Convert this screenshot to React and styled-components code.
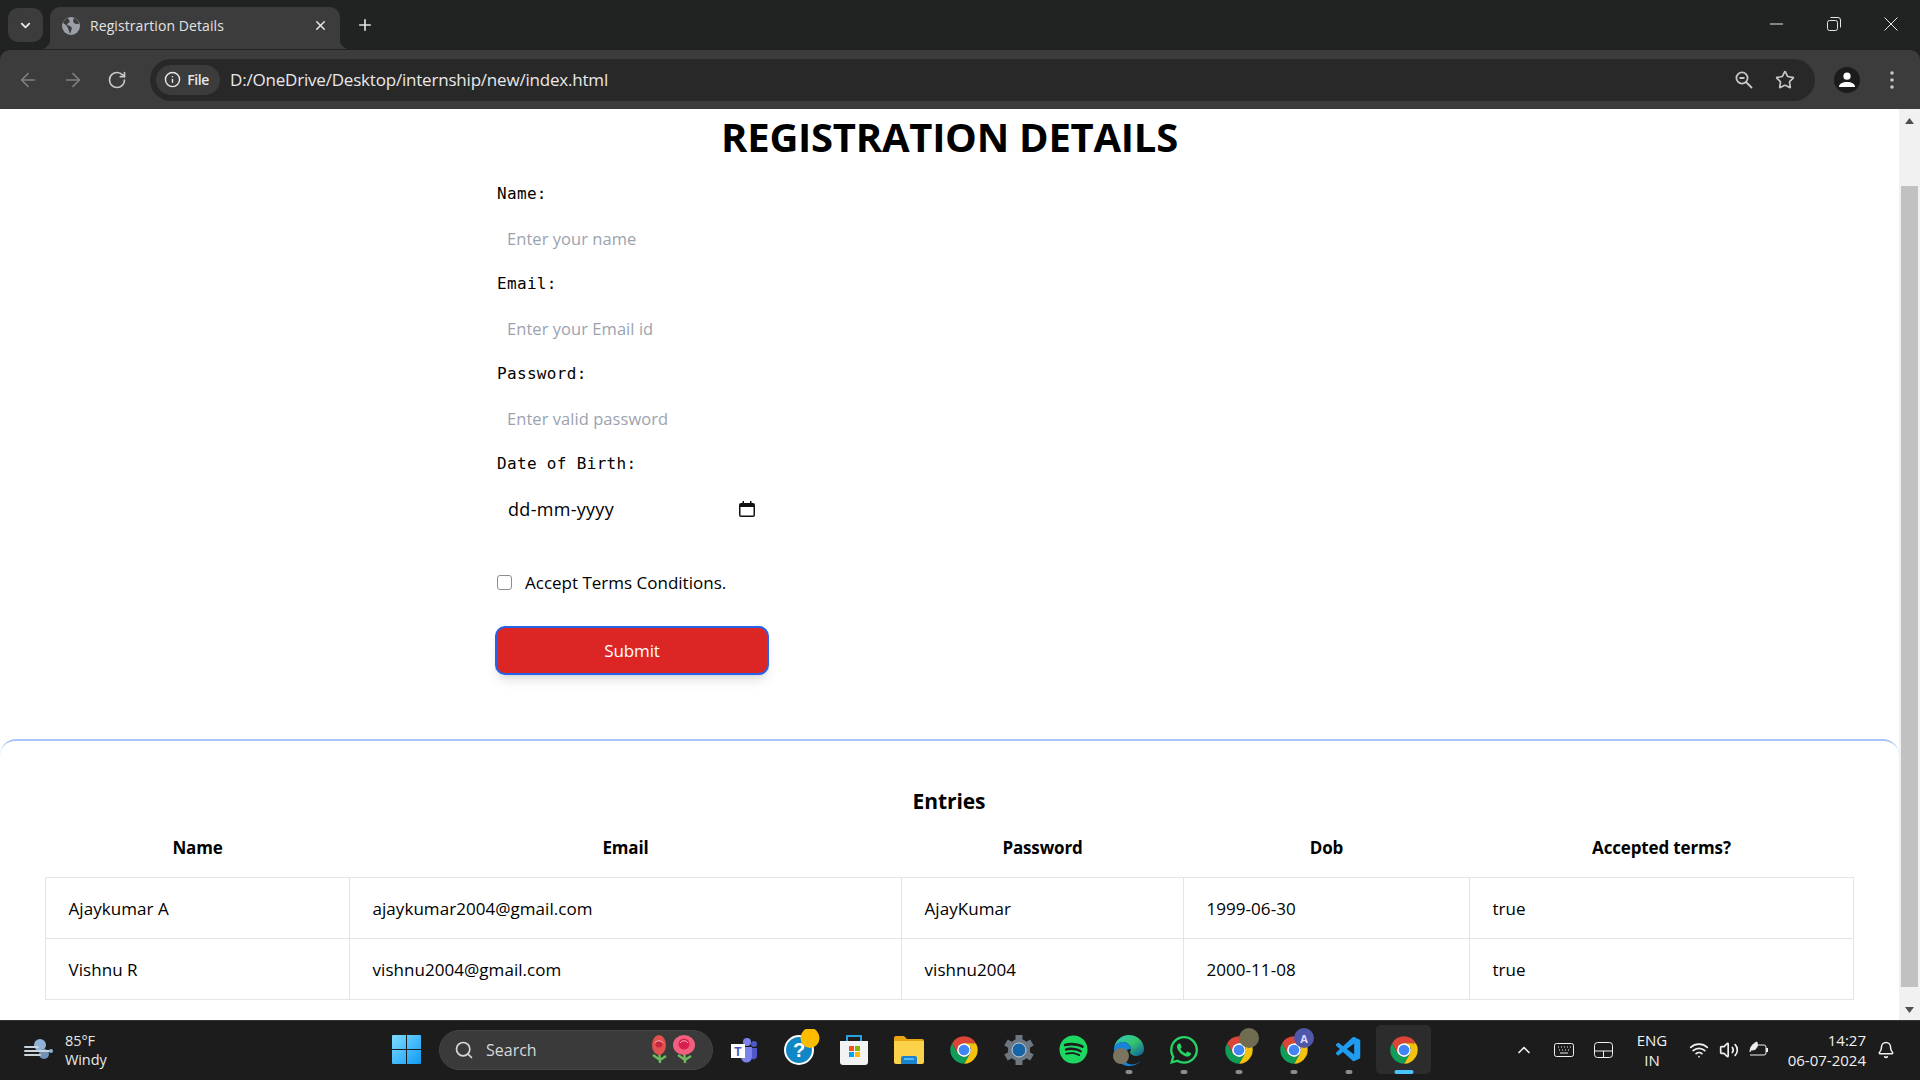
import React from "react";
import styled, { createGlobalStyle } from "styled-components";
import { ArrowLeft, ArrowRight, RotateCw, Info, Star, Search, X, Plus, ChevronDown, ChevronUp, Bell, Volume2, Wifi } from "lucide-react";
import { FaSpotify, FaWhatsapp } from "react-icons/fa";
import { VscVscode } from "react-icons/vsc";

const UI = `"Open Sans", "Noto Sans", sans-serif`;

const Global = createGlobalStyle`
  html, body { margin: 0; padding: 0; overflow: hidden; background: #fff; }
  * { box-sizing: border-box; }
  body { font-family: ${UI}; }
`;

const Screen = styled.div`
  width: 1920px; height: 1080px; display: flex; flex-direction: column;
  background: #202322; overflow: hidden;
`;

/* ---- browser chrome ---- */
const TabStrip = styled.div`
  height: 50px; flex: none; display: flex; align-items: flex-start; padding: 8px 0 0 8px;
`;
const TabSearch = styled.div`
  width: 35px; height: 34px; border-radius: 10px; background: #3c3c3c; color: #e6e6e6;
  display: flex; align-items: center; justify-content: center; margin-right: 7px;
`;
const Tab = styled.div`
  position: relative; width: 290px; height: 42px; margin-top: -1px; background: #3c3c3c; border-radius: 10px 10px 0 0;
  display: flex; align-items: center; padding: 0 12px 5px 12px; color: #e3e3e3;
  &::before, &::after { content: ""; position: absolute; bottom: 0; width: 10px; height: 10px; }
  &::before { left: -10px; background: radial-gradient(circle at 0 0, transparent 10px, #3c3c3c 10.5px); }
  &::after { right: -10px; background: radial-gradient(circle at 100% 0, transparent 10px, #3c3c3c 10.5px); }
`;
const TabTitle = styled.span`
  flex: 1; margin-left: 10px; font-size: 14px; letter-spacing: 0.08px; white-space: nowrap;
`;
const NewTab = styled.div`
  margin: 8px 0 0 16px; color: #e3e3e3; display: flex;
`;
const WindowButtons = styled.div`
  margin-left: auto; height: 34px; display: flex; align-items: center; color: #e6e6e6; padding-right: 22px; gap: 43px; margin-top: -1px;
`;
const Toolbar = styled.div`
  height: 59px; flex: none; background: #3c3c3c; border-radius: 10px 10px 0 0; display: flex; align-items: center;
  padding: 0 16px 0 16px;
`;
const NavGroup = styled.div`
  display: flex; gap: 23px; align-items: center; width: 134px; padding-left: 1px;
`;
const NavIcon = styled.span`
  display: flex; color: ${(p) => (p.$dim ? "#7f8080" : "#c8c8c8")};
`;
const Omnibox = styled.div`
  width: 1665px; height: 42px; border-radius: 21px; background: #282828; display: flex; align-items: center;
  padding: 0 20px 0 6px; color: #e8e8e8; flex: none;
`;
const FileChip = styled.div`
  width: 64px; height: 30px; border-radius: 15px; background: #3c3c3c; display: flex; align-items: center; justify-content: center; gap: 6px; padding-right: 3px;
  font-size: 14px; font-weight: 600; letter-spacing: -0.4px; color: #e8e8e8;
`;
const Url = styled.span`
  margin-left: 10px; font-size: 17px; letter-spacing: -0.2px; flex: 1; white-space: nowrap;
`;
const OmniActions = styled.div`
  display: flex; align-items: center; gap: 22px; color: #c7c7c7;
`;
const Profile = styled.div`
  width: 26px; height: 26px; border-radius: 50%; background: #1b1b1b; margin-left: 19px; display: flex; align-items: center; justify-content: center; flex: none;
`;
const Dots = styled.div`
  margin-left: 30px; display: flex; color: #c7c7c7;
`;

/* ---- page ---- */
const Viewport = styled.div`
  flex: 1; min-height: 0; display: flex; background: #fff;
`;
const Page = styled.main`
  flex: 1; min-width: 0; color: #000; overflow: hidden;
`;
const Title = styled.h1`
  margin: 0; height: 56px; line-height: 55px; text-align: center; font-size: 40px; font-weight: 700; letter-spacing: -0.26px;
`;
const Form = styled.form`
  width: 274px; margin-left: 495px; padding-top: 16px; display: flex; flex-direction: column;
`;
const Label = styled.label`
  display: block; height: 24px; line-height: 26px; padding-left: 2px; margin-bottom: 12px; font-family: "DejaVu Sans Mono", monospace; font-size: 16px; letter-spacing: 0.33px;
`;
const TextInput = styled.input`
  display: block; width: 100%; height: 42px; border: 0; outline: 0; padding: 0 12px; margin-bottom: 12px; font-family: ${UI}; font-size: 16.5px; letter-spacing: 0.05px; background: #fff;
  &::placeholder { color: #9ca3af; opacity: 1; }
`;
const DateField = styled.div`
  height: 46px; display: flex; align-items: center; justify-content: space-between; padding: 0 14px 2px 13px; font-size: 18px; letter-spacing: 0.3px; margin-bottom: 37px;
`;
const CheckRow = styled.label`
  height: 24px; display: flex; align-items: center; gap: 13px; padding-left: 2px; font-size: 17px; letter-spacing: 0; white-space: nowrap; margin-bottom: 32px;
`;
const Check = styled.input`
  appearance: none; width: 15px; height: 15px; margin: 0; border: 1.5px solid #8d8d8d; border-radius: 3px; background: #fff; flex: none;
`;
const Submit = styled.button`
  width: 274px; height: 49px; border: 2px solid #2563eb; border-radius: 10px; background: #dc2626; color: #fff; font-family: ${UI}; font-size: 17px; letter-spacing: -0.1px;
  box-shadow: 0 8px 12px -3px rgba(0,0,0,.12), 0 3px 5px -3px rgba(0,0,0,.1);
`;
const Entries = styled.section`
  margin-top: 64px; border-top: 2px solid #a9c5fa; border-radius: 16px 16px 0 0; padding: 46px 46px 0 45px;
`;
const EntriesTitle = styled.h2`
  margin: 0; height: 28px; line-height: 28px; text-align: center; font-size: 21px; font-weight: 700; letter-spacing: -0.1px;
`;
const Table = styled.table`
  width: 1808px; table-layout: fixed; border-collapse: collapse; font-size: 17px; letter-spacing: 0.05px;
`;
const Col = styled.col`
  width: ${(p) => p.$w}px;
`;
const Th = styled.th`
  height: 62px; font-size: 17px; font-weight: 700; text-align: center; padding: 4px 0 0; letter-spacing: -0.15px;
`;
const Td = styled.td`
  height: 61px; border: 1px solid #e5e5e5; padding: 1px 22.500px 0;
`;
const Scrollbar = styled.div`
  width: 21px; flex: none; background: #f1f1f1; display: flex; flex-direction: column; align-items: center; padding: 0 2px;
`;
const ScrollArrow = styled.div`
  height: ${(p) => p.$h}px; flex: none; display: flex; align-items: center; justify-content: center; color: #505050; font-size: 0;
  padding-bottom: ${(p) => (p.$up ? 54 : 0)}px;
  padding-top: ${(p) => (p.$up ? 0 : 12)}px;
`;
const ScrollThumb = styled.div`
  width: 17px; height: 801px; flex: none; background: #c1c1c1;
`;

/* ---- taskbar ---- */
const Taskbar = styled.footer`
  height: 60px; flex: none; background: #1c1c1c; border-top: 1px solid #333; display: flex; align-items: center; color: #fff; padding-bottom: 2px;
`;
const Weather = styled.div`
  width: 392px; flex: none; display: flex; align-items: center; gap: 11px; padding-left: 24px; font-size: 14.500px; line-height: 19px; letter-spacing: -0.1px; color: #e8e8e8;
`;
const StartButton = styled.div`
  width: 47px; flex: none; display: flex;
`;
const SearchPill = styled.div`
  width: 274px; height: 40px; flex: none; border-radius: 20px; background: #3a3a3a; border: 1px solid #444; display: flex; align-items: center; padding: 0 12px 0 14px; color: #d8d8d8; font-size: 16px;
`;
const SearchText = styled.span`
  margin-left: 12px; flex: 1;
`;
const Apps = styled.div`
  display: flex; margin-left: 3px; flex: none;
`;
const AppItem = styled.div`
  position: relative; width: 55px; height: 49px; display: flex; align-items: center; justify-content: center; border-radius: 5px;
  background: ${(p) => (p.$active ? "#2c2c2c" : "transparent")};
  &::after {
    content: ${(p) => (p.$running || p.$active ? '""' : "none")};
    position: absolute; left: 50%; bottom: 0; transform: translateX(-50%); height: 4px; border-radius: 2px;
    width: ${(p) => (p.$active ? 19 : 7)}px; background: ${(p) => (p.$active ? "#4cc2ff" : "#8c8c8c")};
  }
`;
const Badge = styled.span`
  position: absolute; width: ${(p) => p.$s}px; height: ${(p) => p.$s}px; border-radius: 50%;
  left: ${(p) => p.$l}px; top: ${(p) => p.$t}px; background: ${(p) => p.$bg};
  color: #d9dcff; font-size: 11px; font-weight: 700; display: flex; align-items: center; justify-content: center;
`;
const Tray = styled.div`
  margin-left: 73px; display: flex; align-items: center; flex: none; color: #f0f0f0;
`;
const TrayIcon = styled.span`
  display: flex; justify-content: center; width: ${(p) => p.$w}px;
`;
const Lang = styled.div`
  width: 60px; text-align: center; font-size: 15px; line-height: 20px; margin: 0 2px 0 0;
`;
const Clock = styled.div`
  margin-left: 0; width: 92px; text-align: right; font-size: 15px; line-height: 20px; white-space: nowrap;
`;
const BellSlot = styled.span`
  display: flex; margin-left: 11px;
`;

/* ---- drawn icons ---- */
const Globe = () => (
  <svg width="18" height="18" viewBox="0 0 18 18"><circle cx="9" cy="9" r="9" fill="#9aa0a6" /><path d="M6 1C4 2 2 3 1 6l3 2 2 3 1 3 1 3 1-3 1-3-2-2-3-1 1-2 2-1zM12 1l-1 3 1 2 2 1 3 0c-.500-3-3-5.500-5-6z" fill="#3c3c3c" /></svg>
);
const Restore = () => (
  <svg width="14" height="14" viewBox="0 0 14 14" fill="none" stroke="currentColor"><rect x="0.5" y="3.5" width="10" height="10" rx="2" /><path d="M3.5 .5h7.5a2.5 2.5 0 0 1 2.5 2.5v7.5" /></svg>
);
const MinLine = () => (
  <svg width="14" height="14" viewBox="0 0 14 14"><path d="M0 7h13" stroke="currentColor" /></svg>
);
const CloseX = () => (
  <svg width="14" height="14" viewBox="0 0 14 14"><path d="M.5.5l13 13M13.5.5l-13 13" stroke="currentColor" /></svg>
);
const ZoomOutIcon = () => (
  <svg width="18" height="18" viewBox="0 0 18 18" fill="none" stroke="#c7c7c7" strokeWidth="1.8"><circle cx="7" cy="7" r="5.6" /><path d="M11 11l6 6M4.5 7h5" /></svg>
);
const Person = () => (
  <svg width="16" height="16" viewBox="0 0 16 16" fill="#fff"><circle cx="8" cy="4.2" r="3.6" /><path d="M0 15c0-3.5 3.5-5 8-5s8 1.500 8 5z" /></svg>
);
const VDots = () => (
  <svg width="4" height="18" viewBox="0 0 4 18" fill="#c7c7c7"><circle cx="2" cy="2" r="1.8" /><circle cx="2" cy="9" r="1.8" /><circle cx="2" cy="16" r="1.8" /></svg>
);
const CalendarIcon = () => (
  <svg width="16" height="16" viewBox="0 0 16 16"><path d="M3.500 0h1.500v2h6V0h1.500v2H14a2 2 0 0 1 2 2v10a2 2 0 0 1-2 2H2a2 2 0 0 1-2-2V4a2 2 0 0 1 2-2h1.500zM1.500 6v8a.5.5 0 0 0 .5.5h12a.5.5 0 0 0 .5-.5V6z" fill="#111" /></svg>
);
const Triangle = ({ up }) => (
  <svg width="9" height="6" viewBox="0 0 9 6" fill="currentColor"><path d={up ? "M4.500 0L9 6H0z" : "M4.500 6L0 0h9z"} /></svg>
);
const WindIcon = () => (
  <svg width="30" height="24" viewBox="0 0 30 24"><circle cx="16" cy="7" r="6" fill="#8fb2d6" /><circle cx="20" cy="16" r="5" fill="#6f93b8" /><path d="M1 9h13M1 13h25M1 17h15" stroke="#c9d3dc" strokeWidth="2" strokeLinecap="round" /><circle cx="27" cy="13" r="2" fill="#8fb2d6" /></svg>
);
const WinLogo = () => (
  <svg width="29" height="29" viewBox="0 0 29 29"><defs><linearGradient id="w" x1="0" y1="0" x2="1" y2="1"><stop offset="0" stopColor="#7fdcff" /><stop offset="1" stopColor="#0f9bf5" /></linearGradient></defs><path fill="url(#w)" d="M1 0h13v14H0V1a1 1 0 0 1 1-1zM15 0h13a1 1 0 0 1 1 1v13H15zM0 15h14v14H1a1 1 0 0 1-1-1zM15 15h14v13a1 1 0 0 1-1 1H15z" /></svg>
);
const Rose = ({ x, r, c, d }) => (
  <g transform={`translate(${x} 0)`}>
    <path d="M11 14l1 14M12 25l-7-5M12 25l6-4" stroke="#6cb95e" strokeWidth="2.400" fill="none" />
    <ellipse cx="11" cy="10" rx={r} ry="10" fill={c} /><circle cx="11" cy="9" r={r / 2} fill={d} /><path d="M7 8c2-3 6-3 8 0" stroke="#ffb3bd" fill="none" />
  </g>
);
const Roses = () => (
  <svg width="52" height="29" viewBox="0 0 52 29"><Rose x="0" r="7" c="#e2504f" d="#c5283a" /><Rose x="25" r="11" c="#f2607f" d="#d6204f" /></svg>
);
const Teams = () => (
  <svg width="28" height="28" viewBox="0 0 28 28"><circle cx="17" cy="6" r="4" fill="#7b83eb" /><circle cx="24" cy="8" r="3" fill="#5059c9" /><path d="M11 11h11v10a5 5 0 0 1-11 0z" fill="#7b83eb" /><path d="M22 12h5v8a3.500 3.500 0 0 1-5 3z" fill="#5059c9" /><rect x="1" y="8" width="14" height="14" fill="#fff" /><text x="8" y="19.500" textAnchor="middle" fontSize="12" fontWeight="700" fill="#4b53bc" fontFamily="Liberation Sans">T</text></svg>
);
const HelpIcon = () => (
  <svg width="44" height="42" viewBox="0 0 44 42"><circle cx="22" cy="21" r="14" fill="#0f87c4" stroke="#fff" strokeWidth="2" /><text x="22" y="28" textAnchor="middle" fontSize="20" fontWeight="700" fill="#fff" fontFamily="Liberation Sans">?</text><ellipse cx="33" cy="9" rx="9.500" ry="10" fill="#fdbc00" /></svg>
);
const StoreIcon = () => (
  <svg width="30" height="32" viewBox="0 0 30 32"><path d="M8 7V2h14v5" fill="none" stroke="#2aa0e0" strokeWidth="2" /><path d="M1 7h28v21a3 3 0 0 1-3 3H4a3 3 0 0 1-3-3z" fill="#f3f3f3" /><rect x="10" y="12" width="5" height="5" fill="#f25022" /><rect x="16" y="12" width="5" height="5" fill="#7fba00" /><rect x="10" y="18" width="5" height="5" fill="#00a4ef" /><rect x="16" y="18" width="5" height="5" fill="#ffb900" /></svg>
);
const FolderIcon = () => (
  <svg width="30" height="28" viewBox="0 0 30 28"><path d="M0 2a2 2 0 0 1 2-2h8l3 3h15a2 2 0 0 1 2 2v4H0z" fill="#e8a513" /><path d="M0 5h30v21a2 2 0 0 1-2 2H2a2 2 0 0 1-2-2z" fill="#fbd249" /><path d="M7 28v-6a2 2 0 0 1 2-2h12a2 2 0 0 1 2 2v6z" fill="#1a82d0" /><rect x="10" y="22" width="10" height="2" fill="#5bb8f0" /></svg>
);
const Gear = () => (
  <svg width="30" height="30" viewBox="0 0 30 30"><g fill="#6d7782"><circle cx="15" cy="15" r="11" />{[0, 60, 120, 180, 240, 300].map((a) => (<rect key={a} x="11.500" y="0" width="7" height="7" transform={`rotate(${a} 15 15)`} />))}</g><circle cx="15" cy="15" r="7" fill="#1565a8" stroke="#c3d0da" strokeWidth="1" /></svg>
);
const Edge = () => (
  <svg width="30" height="32" viewBox="0 0 30 32"><defs><linearGradient id="e" x1="0" y1="0" x2="1" y2="1"><stop offset="0" stopColor="#2ec9c4" /><stop offset=".5" stopColor="#36c56b" /><stop offset="1" stopColor="#0c59a4" /></linearGradient></defs><path d="M15 1c8 0 15 6 15 14 0 5-4 7-8 7-3 0-6-2-6-4 0-1 1-1 1-3 0-4-4-7-8-7C5 8 1 11 0 14 1 7 7 1 15 1z" fill="url(#e)" /><path d="M0 14c1-4 5-6 9-6 4 0 8 3 8 7-6 0-9 5-5 13 2 3 9 4 15-1-4 4-8 5-12 5C7 32 0 25 0 14z" fill="#1784d8" /></svg>
);
const Chrome = () => (
  <svg width="30" height="30" viewBox="0 0 48 48">
    {[["#db4437", 0], ["#f4c20d", 120], ["#0f9d58", 240]].map(([c, a]) => (
      <path key={a} fill={c} transform={`rotate(${a} 24 24)`} d="M5 13A22 22 0 0 1 43.050 13L24 13A11 11 0 0 0 14.470 18.500Z" />
    ))}
    <path fill="#db4437" d="M5 13L14.500 29.500L19 27 14.470 18.500 12 13z" />
    <path fill="#f4c20d" d="M43.050 13L24 13v3L32 20z" />
    <path fill="#0f9d58" d="M24 46L33.500 29.500 30 27 24 35z" />
    <circle cx="24" cy="24" r="11" fill="#fff" /><circle cx="24" cy="24" r="8.500" fill="#4285f4" />
  </svg>
);
const Keyboard = () => (
  <svg width="20" height="14" viewBox="0 0 20 14" fill="none" stroke="currentColor"><rect x=".5" y=".5" width="19" height="13" rx="2" /><path d="M4 4h1M7 4h1M10 4h1M13 4h1M16 4h1M5 7h1M8 7h1M11 7h1M14 7h1M6 10h8" /></svg>
);
const Touchpad = () => (
  <svg width="19" height="16" viewBox="0 0 19 16" fill="none" stroke="currentColor"><rect x=".5" y=".5" width="18" height="15" rx="3" /><path d="M.5 9h18M9.500 9v6.500" /></svg>
);
const Battery = () => (
  <svg width="20" height="18" viewBox="0 0 20 18" fill="none" stroke="currentColor"><path d="M7 4h8a2 2 0 0 1 2 2v6a2 2 0 0 1-2 2H1" /><path d="M18 7v4" strokeWidth="2" /><path d="M1 11C1 5 5 2 8 1c1 4 0 8-5 8" fill="currentColor" /></svg>
);

const rows = [
  ["Ajaykumar A", "ajaykumar2004@gmail.com", "AjayKumar", "1999-06-30", "true"],
  ["Vishnu R", "vishnu2004@gmail.com", "vishnu2004", "2000-11-08", "true"],
];
const cols = [304, 552, 282, 286, 384];
const heads = ["Name", "Email", "Password", "Dob", "Accepted terms?"];

export default function App() {
  return (
    <Screen>
      <Global />
      <TabStrip>
        <TabSearch><ChevronDown size={15} strokeWidth={3} /></TabSearch>
        <Tab>
          <Globe />
          <TabTitle>Registrartion Details</TabTitle>
          <X size={15} strokeWidth={2.5} />
        </Tab>
        <NewTab><Plus size={18} strokeWidth={2.2} /></NewTab>
        <WindowButtons><MinLine /><Restore /><CloseX /></WindowButtons>
      </TabStrip>
      <Toolbar>
        <NavGroup>
          <NavIcon $dim><ArrowLeft size={22} strokeWidth={1.7} /></NavIcon>
          <NavIcon $dim><ArrowRight size={22} strokeWidth={1.7} /></NavIcon>
          <NavIcon><RotateCw size={20} strokeWidth={2} /></NavIcon>
        </NavGroup>
        <Omnibox>
          <FileChip><Info size={17} />File</FileChip>
          <Url>D:/OneDrive/Desktop/internship/new/index.html</Url>
          <OmniActions><ZoomOutIcon /><Star size={20} strokeWidth={2} /></OmniActions>
        </Omnibox>
        <Profile><Person /></Profile>
        <Dots><VDots /></Dots>
      </Toolbar>
      <Viewport>
        <Page>
          <Title>REGISTRATION DETAILS</Title>
          <Form>
            <Label>Name:</Label>
            <TextInput placeholder="Enter your name" />
            <Label>Email:</Label>
            <TextInput placeholder="Enter your Email id" />
            <Label>Password:</Label>
            <TextInput placeholder="Enter valid password" />
            <Label>Date of Birth:</Label>
            <DateField><span>dd-mm-yyyy</span><CalendarIcon /></DateField>
            <CheckRow><Check type="checkbox" />Accept Terms Conditions.</CheckRow>
            <Submit type="button">Submit</Submit>
          </Form>
          <Entries>
            <EntriesTitle>Entries</EntriesTitle>
            <Table>
              <colgroup>{cols.map((w, i) => <Col key={i} $w={w} />)}</colgroup>
              <thead><tr>{heads.map((h) => <Th key={h}>{h}</Th>)}</tr></thead>
              <tbody>
                {rows.map((r) => (
                  <tr key={r[0]}>{r.map((c, i) => <Td key={i}>{c}</Td>)}</tr>
                ))}
              </tbody>
            </Table>
          </Entries>
        </Page>
        <Scrollbar>
          <ScrollArrow $h={77} $up><Triangle up /></ScrollArrow>
          <ScrollThumb />
          <ScrollArrow $h={33}><Triangle /></ScrollArrow>
        </Scrollbar>
      </Viewport>
      <Taskbar>
        <Weather>
          <WindIcon />
          <div>85°F<br />Windy</div>
        </Weather>
        <StartButton><WinLogo /></StartButton>
        <SearchPill>
          <Search size={20} strokeWidth={2} />
          <SearchText>Search</SearchText>
          <Roses />
        </SearchPill>
        <Apps>
          <AppItem><Teams /></AppItem>
          <AppItem><HelpIcon /></AppItem>
          <AppItem><StoreIcon /></AppItem>
          <AppItem><FolderIcon /></AppItem>
          <AppItem><Chrome /></AppItem>
          <AppItem><Gear /></AppItem>
          <AppItem><FaSpotify size={29} color="#1ed760" /></AppItem>
          <AppItem $running><Edge /><Badge $s={16} $l={12} $t={23} $bg="#7b7460" /></AppItem>
          <AppItem $running><FaWhatsapp size={32} color="#25d366" /></AppItem>
          <AppItem $running><Chrome /><Badge $s={20} $l={28} $t={3} $bg="#6f6c50" /></AppItem>
          <AppItem $running><Chrome /><Badge $s={20} $l={28} $t={3} $bg="#5057a8">A</Badge></AppItem>
          <AppItem $running><VscVscode size={30} color="#1f9cf0" /></AppItem>
          <AppItem $active><Chrome /></AppItem>
        </Apps>
        <Tray>
          <TrayIcon $w={40}><ChevronUp size={20} strokeWidth={2} /></TrayIcon>
          <TrayIcon $w={40}><Keyboard /></TrayIcon>
          <TrayIcon $w={38}><Touchpad /></TrayIcon>
          <Lang>ENG<br />IN</Lang>
          <TrayIcon $w={30}><Wifi size={20} /></TrayIcon>
          <TrayIcon $w={30}><Volume2 size={20} /></TrayIcon>
          <TrayIcon $w={30}><Battery /></TrayIcon>
          <Clock>14:27<br />06-07-2024</Clock>
          <BellSlot><Bell size={18} /></BellSlot>
        </Tray>
      </Taskbar>
    </Screen>
  );
}
